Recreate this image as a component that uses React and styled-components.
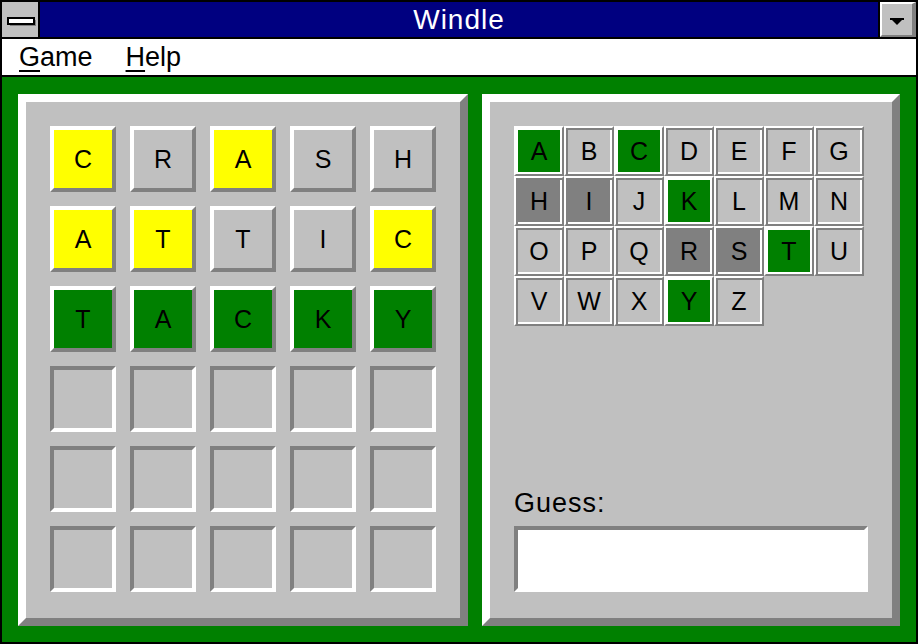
import styled, { createGlobalStyle } from 'styled-components';

const GlobalStyle = createGlobalStyle`
  html, body {
    margin: 0;
    padding: 0;
    background: #000000;
  }
  * {
    box-sizing: border-box;
  }
`;

const guesses = [
  [['C', 'present'], ['R', 'absent'], ['A', 'present'], ['S', 'absent'], ['H', 'absent']],
  [['A', 'present'], ['T', 'present'], ['T', 'absent'], ['I', 'absent'], ['C', 'present']],
  [['T', 'correct'], ['A', 'correct'], ['C', 'correct'], ['K', 'correct'], ['Y', 'correct']],
];

const keyStates = {
  A: 'correct', C: 'correct', K: 'correct', T: 'correct', Y: 'correct',
  H: 'absent', I: 'absent', R: 'absent', S: 'absent',
};

const tileColors = {
  present: '#ffff00',
  correct: '#008000',
  absent: '#c0c0c0',
};

const keyColors = {
  correct: '#008000',
  absent: '#808080',
  unused: '#c0c0c0',
};

export default function App() {
  const rows = [];
  for (let r = 0; r < 6; r++) {
    rows.push(guesses[r] || null);
  }
  const letters = 'ABCDEFGHIJKLMNOPQRSTUVWXYZ'.split('');

  return (
    <>
      <GlobalStyle />
      <Window>
        <TitleRow>
          <SysBox>
            <svg width="36" height="35" viewBox="0 0 36 35">
              <rect x="8" y="18" width="26" height="6" fill="#808080" />
              <rect x="6" y="16" width="26" height="6" fill="#ffffff" stroke="#000000" strokeWidth="2" />
            </svg>
          </SysBox>
          <Title>Windle</Title>
          <DropButton>
            <svg width="30" height="31" viewBox="0 0 30 31">
              <polygon points="8,14 22,14 15,21" fill="#000000" />
              <rect x="8" y="14" width="14" height="2" fill="#000000" />
            </svg>
          </DropButton>
        </TitleRow>
        <MenuBar>
          <MenuItem><u>G</u>ame</MenuItem>
          <MenuItem><u>H</u>elp</MenuItem>
        </MenuBar>
        <Client>
          <BoardPanel>
            <Board>
              {rows.map((row, r) =>
                [0, 1, 2, 3, 4].map((c) =>
                  row ? (
                    <Tile key={`${r}-${c}`} $color={tileColors[row[c][1]]}>{row[c][0]}</Tile>
                  ) : (
                    <EmptyTile key={`${r}-${c}`} />
                  )
                )
              )}
            </Board>
          </BoardPanel>
          <SidePanel>
            <Keyboard>
              {letters.map((l) => {
                const state = keyStates[l] || 'unused';
                return (
                  <Key key={l} $state={state}>{l}</Key>
                );
              })}
            </Keyboard>
            <GuessArea>
              <GuessLabel>Guess:</GuessLabel>
              <GuessInput />
            </GuessArea>
          </SidePanel>
        </Client>
      </Window>
    </>
  );
}

const Window = styled.div`
  width: 918px;
  height: 644px;
  background: #000000;
  padding: 2px;
  display: flex;
  flex-direction: column;
  gap: 2px;
  font-family: 'Liberation Sans', Arial, sans-serif;
`;

const TitleRow = styled.div`
  height: 35px;
  display: flex;
  gap: 2px;
`;

const SysBox = styled.div`
  width: 36px;
  height: 35px;
  background: #c0c0c0;
  display: flex;
`;

const Title = styled.div`
  flex: 1;
  background: #000080;
  color: #ffffff;
  font-size: 28px;
  letter-spacing: 1px;
  line-height: 35px;
  text-align: center;
`;

const DropButton = styled.div`
  width: 36px;
  height: 35px;
  background: #c0c0c0;
  border-style: solid;
  border-width: 2px 4px 2px 2px;
  border-color: #ffffff #808080 #808080 #ffffff;
  display: flex;
`;

const MenuBar = styled.div`
  height: 36px;
  background: #ffffff;
  display: flex;
  align-items: center;
  padding-left: 17px;
  gap: 33px;
`;

const MenuItem = styled.span`
  font-size: 27px;
  line-height: 36px;
  color: #000000;
  u {
    text-decoration-thickness: 2px;
    text-underline-offset: 4px;
  }
`;

const Client = styled.div`
  flex: 1;
  background: #008000;
  padding: 17px 16px 16px 16px;
  display: flex;
  gap: 14px;
`;

const Panel = styled.div`
  background: #c0c0c0;
  border: 8px solid;
  border-color: #ffffff #808080 #808080 #ffffff;
  padding: 24px;
`;

const BoardPanel = styled(Panel)`
  width: 450px;
`;

const Board = styled.div`
  display: grid;
  grid-template-columns: repeat(5, 66px);
  grid-auto-rows: 66px;
  gap: 14px;
`;

const Tile = styled.div`
  background: ${(p) => p.$color};
  border: 4px solid;
  border-color: #ffffff #808080 #808080 #ffffff;
  display: flex;
  align-items: center;
  justify-content: center;
  font-size: 25px;
  color: #000000;
`;

const EmptyTile = styled.div`
  background: #c0c0c0;
  border: 4px solid;
  border-color: #808080 #ffffff #ffffff #808080;
`;

const SidePanel = styled(Panel)`
  flex: 1;
  display: flex;
  flex-direction: column;
  justify-content: space-between;
  padding-bottom: 26px;
`;

const Keyboard = styled.div`
  display: grid;
  grid-template-columns: repeat(7, 50px);
  grid-auto-rows: 50px;
`;

const Key = styled.div`
  background: ${(p) => keyColors[p.$state]};
  border: 2px solid;
  border-color: #ffffff #808080 #808080 #ffffff;
  box-shadow: ${(p) =>
    p.$state === 'correct'
      ? 'inset 0 0 0 2px #ffffff'
      : 'inset 2px 2px 0 #808080, inset -2px -2px 0 #ffffff'};
  display: flex;
  align-items: center;
  justify-content: center;
  font-size: 25px;
  color: #000000;
`;

const GuessArea = styled.div`
  display: flex;
  flex-direction: column;
`;

const GuessLabel = styled.div`
  font-size: 27px;
  letter-spacing: 1px;
  line-height: 30px;
  color: #000000;
  margin-bottom: 8px;
`;

const GuessInput = styled.div`
  width: 354px;
  height: 66px;
  background: #ffffff;
  border: 4px solid;
  border-color: #808080 #ffffff #ffffff #808080;
`;
